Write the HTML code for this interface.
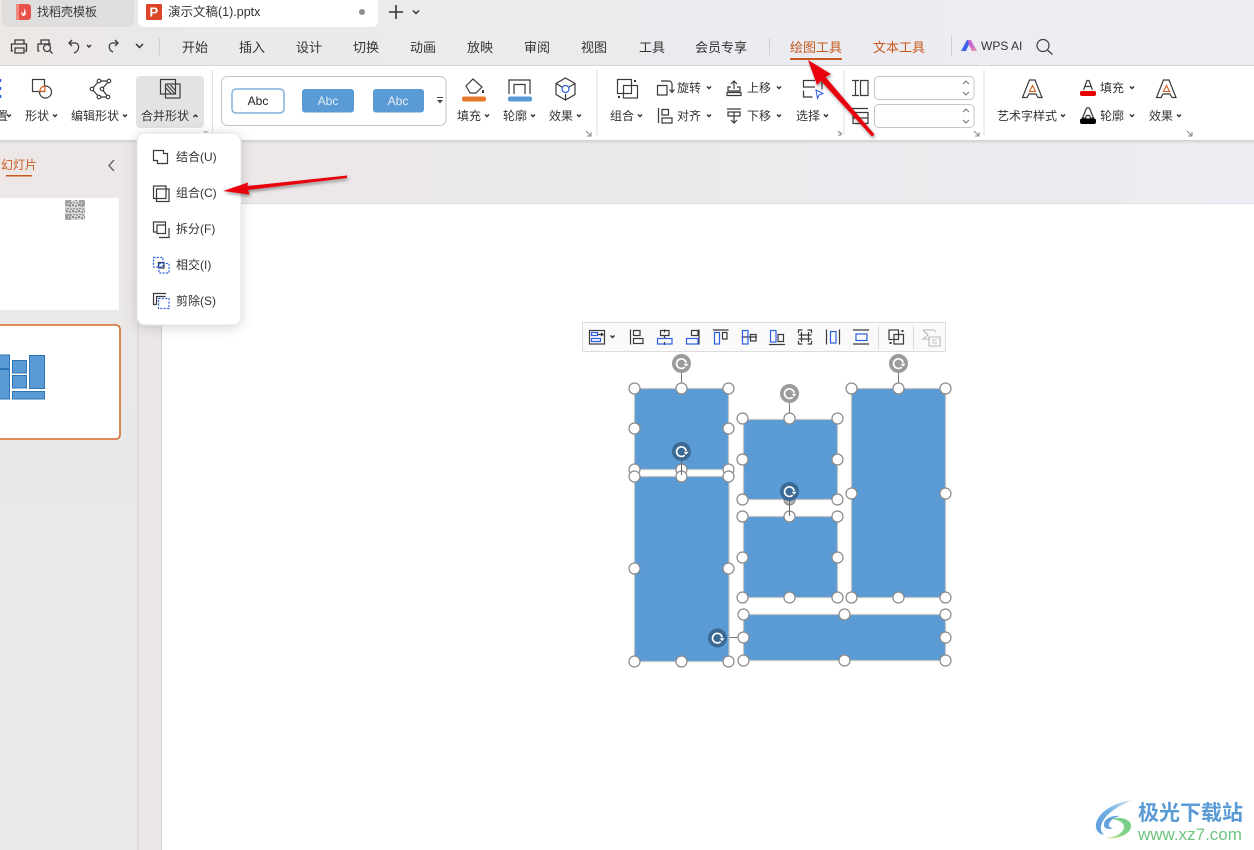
<!DOCTYPE html>
<html lang="zh-CN">
<head>
<meta charset="utf-8">
<title>WPS</title>
<style>
html,body{margin:0;padding:0;background:#fff;width:1254px;height:850px;overflow:hidden}
svg{display:block;position:absolute;left:0;top:0}
text{font-family:"Liberation Sans","Noto Sans CJK SC",sans-serif;fill:#333}
.t13{font-size:13px}
.t12{font-size:12px}
.i{fill:none;stroke:#3a3a3a;stroke-width:1.2}
.b{fill:none;stroke:#2b5fe0;stroke-width:1.2}
.c{fill:none;stroke:#333;stroke-width:1.5}
.h circle{fill:#fff;stroke:#8a8a8a;stroke-width:1.2}
.s{fill:#5b9bd5;stroke:#c4c4c4;stroke-width:1.2}
</style>
</head>
<body>
<svg width="1254" height="850" viewBox="0 0 1254 850" xmlns="http://www.w3.org/2000/svg">
<defs>
<linearGradient id="hd" x1="0" x2="1" y1="0" y2="0"><stop offset="0" stop-color="#ebe8e6"/><stop offset=".45" stop-color="#ebebee"/><stop offset="1" stop-color="#ecedf3"/></linearGradient>
<linearGradient id="bd" x1="0" x2="1" y1="0" y2="0"><stop offset="0" stop-color="#ede7e7"/><stop offset=".4" stop-color="#ebe8ea"/><stop offset="1" stop-color="#ecedf2"/></linearGradient>
<linearGradient id="pn" x1="0" x2="0" y1="0" y2="1"><stop offset="0" stop-color="#eee7e7"/><stop offset=".4" stop-color="#e9e8e9"/><stop offset="1" stop-color="#ebe9ea"/></linearGradient>
<linearGradient id="rs" x1="0" x2="0" y1="0" y2="1"><stop offset="0" stop-color="#cfcfcf"/><stop offset="1" stop-color="#cfcfcf" stop-opacity="0"/></linearGradient>
<linearGradient id="sb" x1="0" x2="1" y1="0" y2="1"><stop offset="0" stop-color="#5f9ede"/><stop offset="1" stop-color="#6aa9df"/></linearGradient>
<linearGradient id="sb2" x1="1" x2="0" y1="0" y2="1"><stop offset="0" stop-color="#d5e8f5"/><stop offset=".5" stop-color="#70aee3"/><stop offset="1" stop-color="#5d9bdc"/></linearGradient>
<linearGradient id="sg" x1="1" x2="0" y1="0" y2="1"><stop offset="0" stop-color="#6ccb88"/><stop offset=".6" stop-color="#88d488"/><stop offset="1" stop-color="#eee389"/></linearGradient>
<filter id="ms" x="-30%" y="-20%" width="160%" height="140%"><feDropShadow dx="0" dy="2" stdDeviation="6" flood-color="#000" flood-opacity=".16"/></filter>
<filter id="as" x="-20%" y="-20%" width="140%" height="140%"><feDropShadow dx="1" dy="2" stdDeviation="1.5" flood-color="#000" flood-opacity=".4"/></filter>
<pattern id="qr" width="6" height="6" patternUnits="userSpaceOnUse"><rect width="6" height="6" fill="#d8d8d8"/><rect width="2" height="2" fill="#8a8a8a"/><rect x="3" y="1" width="2" height="2" fill="#999"/><rect x="1" y="4" width="2" height="1" fill="#8a8a8a"/><rect x="4" y="4" width="2" height="2" fill="#aaa"/></pattern>
<g id="rg"><circle r="9.5" fill="#9b9b9b"/><path d="M4.6 -.6A4.8 4.8 0 1 0 3.2 3.6" fill="none" stroke="#fff" stroke-width="1.7"/><path d="M2.2 .2L7 .2L4.6 3.2Z" fill="#fff"/></g>
<g id="rd"><circle r="9.5" fill="#3a6a94"/><path d="M4.6 -.6A4.8 4.8 0 1 0 3.2 3.6" fill="none" stroke="#fff" stroke-width="1.7"/><path d="M2.2 .2L7 .2L4.6 3.2Z" fill="#fff"/></g>
</defs>

<!-- backgrounds -->
<rect width="1254" height="66" fill="url(#hd)"/>
<rect y="65" width="1254" height="1.2" fill="#d6d5d5"/>
<rect y="66" width="1254" height="74" fill="#fff"/>
<rect y="140" width="1254" height="64" fill="url(#bd)"/>
<rect y="144" width="138" height="706" fill="url(#pn)"/>
<rect x="138" y="144" width="24" height="706" fill="#ebe7e8"/>
<rect y="140" width="1254" height="4" fill="url(#rs)"/>
<rect x="137.500" y="144" width="1" height="706" fill="#cfcdce"/>
<rect x="161" y="203" width="1" height="647" fill="#d2d0d1"/>
<rect x="162" y="203" width="1092" height="647" fill="#fff"/>
<rect x="162" y="203" width="1092" height="1" fill="#dcdcde"/>

<!-- tabs -->
<rect x="2" y="-6" width="132" height="33" rx="6" fill="#e0dedc"/>
<rect x="138" y="-6" width="240" height="33" rx="6" fill="#fff"/>
<path d="M16 4h12a3 3 0 0 1 3 3v10a3 3 0 0 1-3 3H16z" fill="#e9524a"/><rect x="16" y="4" width="3" height="16" fill="#f08a80"/>
<path d="M24 8c1 3 0 4-1 6-1-1-1-2-1-3-1 1-1 4 1 5 3 0 4-4 1-8z" fill="#fff"/>
<rect x="146" y="4" width="16" height="16" rx="1.5" fill="#dd4527"/>
<text x="149.500" y="16.500" style="font-size:13px;font-weight:bold;fill:#fff">P</text>
<text x="37" y="16" class="t12" style="fill:#3a3a3a">找稻壳模板</text>
<text x="168" y="16" style="font-size:12.500px;fill:#333">演示文稿(1).pptx</text>
<circle cx="362" cy="12" r="3" fill="#8e8e8e"/>
<path d="M396 5v14M389 12h14" stroke="#333" stroke-width="1.6" fill="none"/>
<path d="M413 10.500l3 3 3-3" class="c"/>

<!-- quick access -->
<g class="i" style="stroke-width:1.3">
<path d="M15 44v-4h9v4M13 51h-1.500v-7h15v7H25M15 48h9v5h-9z"/>
<path d="M39.500 51h-1.500v-7h13M41 44v-4h8v4"/><circle cx="47" cy="48" r="3.500"/><path d="M49.500 50.500l3 3"/>
<path d="M72 40l-3 3 3 3M69 43h6c5 0 5 8-1 10"/>
<path d="M115 40l3 3-3 3M118 43h-5c-5 0-5 7 0 9"/>
</g>
<path d="M87 45l2 2 2-2M136 44l3.500 3.500 3.500-3.500" class="c"/>
<rect x="159" y="38" width="1" height="17" fill="#cfcfcf"/>

<!-- main tabs -->
<g class="t13">
<text x="182" y="52">开始</text><text x="239" y="52">插入</text><text x="296" y="52">设计</text><text x="353" y="52">切换</text><text x="410" y="52">动画</text><text x="467" y="52">放映</text><text x="524" y="52">审阅</text><text x="581" y="52">视图</text><text x="639" y="52">工具</text><text x="695" y="52">会员专享</text>
<text x="790" y="52" style="fill:#c8591e">绘图工具</text><text x="873" y="52" style="fill:#c8591e">文本工具</text>
</g>
<rect x="790" y="58" width="52" height="2" fill="#c8591e"/>
<rect x="769" y="38" width="1" height="17" fill="#cfcfcf"/>
<rect x="951" y="36" width="1" height="20" fill="#cfcfcf"/>
<path d="M961 51l6-11h4l-5 11z" fill="#3f63e8"/><path d="M968 40h3l3 6 3 5h-5l-3-6z" fill="#c968d0"/><path d="M971 46l2 5h4z" fill="#f08fa8"/>
<text x="981" y="50" style="font-size:12px;fill:#333">WPS AI</text>
<circle cx="1043" cy="45.500" r="6" class="i"/><path d="M1047.500 50l5 4.500" class="i"/>

<!-- ribbon separators -->
<g fill="#dedede"><rect x="212" y="70" width="1" height="65"/><rect x="596.500" y="70" width="1" height="65"/><rect x="843.500" y="70" width="1" height="65"/><rect x="983.500" y="70" width="1" height="65"/></g>

<!-- ribbon left -->
<path d="M.5 79v3M.5 87v3M.5 95v3" stroke="#2b5fe0" stroke-width="1.6"/>
<text x="-4" y="120" class="t12">置</text>
<path d="M7 114.500l2 2 2-2M53 114.500l2 2 2-2M123 114.500l2 2 2-2" class="c"/>
<circle cx="45.500" cy="92" r="6" fill="#fff" stroke="#3a3a3a" stroke-width="1.200"/>
<rect x="32.500" y="79.500" width="12" height="12" fill="#fff" stroke="#3a3a3a" stroke-width="1.200"/>
<path d="M39.700 91.300C40 88.500 42 86.300 44.800 86V91.300z" fill="#fff" stroke="#d2601f" stroke-width="1.200"/>
<text x="25" y="120" class="t12">形状</text>
<g class="i"><path d="M99 81h10l-7 8 6 8h-9l-7-8z"/></g>
<g fill="#fff" stroke="#3a3a3a" stroke-width="1.100"><circle cx="99" cy="81" r="1.800"/><circle cx="109" cy="81" r="1.800"/><circle cx="92" cy="89" r="1.800"/><circle cx="102" cy="89" r="1.800"/><circle cx="99" cy="97" r="1.800"/><circle cx="108" cy="97" r="1.800"/></g>
<text x="71" y="120" class="t12">编辑形状</text>
<rect x="136" y="76" width="68" height="52" rx="4" fill="#e3e3e3"/>
<g class="i"><rect x="160.500" y="79.500" width="15" height="14.500"/><rect x="165.500" y="84" width="14.500" height="14"/><path d="M167 85l8 9M170.500 85l4.500 5M166 88l5.500 6"/></g>
<text x="141" y="120" class="t12">合并形状</text>
<path d="M193.500 117l2-2 2 2" class="c"/>
<path d="M204 131l3 3M207 131v3h-3" stroke="#888" fill="none"/>

<!-- style gallery -->
<rect x="221.500" y="76.500" width="224.500" height="49" rx="6" fill="#fff" stroke="#c4c4c4"/>
<rect x="232" y="89" width="52" height="24" rx="4" fill="#fff" stroke="#82b1db" stroke-width="1.500"/>
<rect x="302" y="89" width="52" height="23.500" rx="3" fill="#5b9bd5"/>
<rect x="373" y="89" width="51" height="23.500" rx="3" fill="#5b9bd5"/>
<text x="258" y="105" text-anchor="middle" style="font-size:12px;fill:#222">Abc</text>
<text x="328" y="105" text-anchor="middle" style="font-size:12px;fill:#e4eef8">Abc</text>
<text x="398" y="105" text-anchor="middle" style="font-size:12px;fill:#e4eef8">Abc</text>
<path d="M437 97.500h6" stroke="#444"/><path d="M437 100l3 3.500 3-3.500z" fill="#444"/>

<!-- fill/outline/effect -->
<path d="M466 86l7-7 9 8-6 6h-6z" fill="#fff" stroke="#3a3a3a" stroke-width="1.200"/><path d="M483 90v3" stroke="#3a3a3a" stroke-width="2"/>
<rect x="462" y="96.500" width="24" height="5" rx="2" fill="#e8772e"/>
<path d="M509 94V80h21v14M514 94V84.500h11V94" class="i"/>
<rect x="508" y="96.500" width="24" height="5" rx="2" fill="#5b9bd5"/>
<path d="M565.500 78l9.500 5.500v11L565.500 100l-9.500-5.500v-11z" class="i"/>
<path d="M556 83.500l6 3.500M575 83.500l-6 3.500M565.500 94v6" class="i"/>
<circle cx="565.500" cy="89" r="3.500" fill="none" stroke="#2b5fe0" stroke-width="1.200"/>
<text x="457" y="120" class="t12">填充</text><text x="503" y="120" class="t12">轮廓</text><text x="549" y="120" class="t12">效果</text>
<path d="M485 114.500l2 2 2-2M531 114.500l2 2 2-2M577 114.500l2 2 2-2" class="c"/>
<path d="M586 131l5 5M591 132v4h-4" stroke="#888" fill="none"/>

<!-- arrange -->
<g class="i"><rect x="617.500" y="79.500" width="14" height="14"/><rect x="623.500" y="85.500" width="14" height="12.500"/></g>
<rect x="634" y="80" width="2" height="2" fill="#333"/><rect x="618" y="96" width="2" height="2" fill="#333"/>
<text x="610" y="120" class="t12">组合</text>
<path d="M638 114.500l2 2 2-2" class="c"/>
<path d="M657.500 85.500h9.500v9.500h-9.500zM661 81h8a3 3 0 0 1 3 3v8" class="i"/><path d="M669.500 89.500l2.500 2.800 2.500-2.800" class="i"/>
<text x="677" y="92" class="t12">旋转</text><path d="M707 86.500l2 2 2-2" class="c"/>
<path d="M658.500 108v15M662 109.500h6.500v5.500h-6.500zM662 118h10v5h-10z" class="i"/>
<text x="677" y="120" class="t12">对齐</text><path d="M707 114.500l2 2 2-2" class="c"/>
<path d="M731 84l3-3 3 3M734 81v8M731 87h-3v4h12v-4h-3M727 92.500h14v3h-14z" class="i"/>
<text x="747" y="92" class="t12">上移</text><path d="M777 86.500l2 2 2-2" class="c"/>
<path d="M727 109h14M728 112h12v4h-12zM734 112v11M731 120l3 3 3-3" class="i"/>
<text x="747" y="120" class="t12">下移</text><path d="M777 114.500l2 2 2-2" class="c"/>
<path d="M815 80.500h-11.500v6.500h11.500M803.500 90.500v6.500h9M822 80.500v9" class="i"/>
<path d="M816 90l7 3.500-4 1.500-1.500 3.500z" fill="#fff" stroke="#2b5fe0"/>
<text x="796" y="120" class="t12">选择</text><path d="M824 114.500l2 2 2-2" class="c"/>
<path d="M838 131l3 3M841 132v3h-3" stroke="#888" fill="none"/>

<!-- size -->
<path d="M852 80.500h7M852 95.500h7M855.500 80.500v15M860.500 80.500h7.500v15h-7.500z" class="i"/>
<path d="M852 108.500h16M853 112.500h15v11h-15zM853 118h15" class="i"/>
<rect x="874.500" y="76.500" width="99.500" height="23" rx="4" fill="#fff" stroke="#c6c6c6"/>
<rect x="874.500" y="104.500" width="99.500" height="23" rx="4" fill="#fff" stroke="#c6c6c6"/>
<path d="M963 84l3-3 3 3M963 92l3 3 3-3M963 112l3-3 3 3M963 120l3 3 3-3" fill="none" stroke="#777"/>
<path d="M974 131l5 5M979 132v4h-4" stroke="#888" fill="none"/>

<!-- art text -->
<path d="M1022.500 97.500l7-17.500h5.500l7 17.500h-4l-2-3.500h-7l-2 3.500z" class="i"/><path d="M1029.500 91.500l3-6 3 6z" fill="none" stroke="#d2601f" stroke-width="1.100"/>
<text x="997" y="120" class="t12">艺术字样式</text><path d="M1061 114.500l2 2 2-2" class="c"/>
<path d="M1083.500 90l3.500-9.500h2l3.500 9.500M1085 86.500h6" class="i"/><rect x="1080" y="91" width="16" height="5" rx="2" fill="#e60000"/>
<text x="1100" y="92" class="t12">填充</text><path d="M1130 86.500l2 2 2-2" class="c"/>
<path d="M1082.500 118l4-10h3l4 10h-3l-1-2.500h-3l-1 2.500z" class="i"/><rect x="1080" y="118.500" width="16" height="5.500" rx="2" fill="#000"/>
<text x="1100" y="120" class="t12">轮廓</text><path d="M1130 114.500l2 2 2-2" class="c"/>
<path d="M1156.500 97.500l7-17.500h5.500l7 17.500h-4l-2-3.500h-7l-2 3.500z" class="i"/><path d="M1163.500 91.500l3-6 3 6z" fill="none" stroke="#d2601f" stroke-width="1.100"/>
<text x="1149" y="120" class="t12">效果</text><path d="M1177 114.500l2 2 2-2" class="c"/>
<path d="M1187 131l5 5M1192 132v4h-4" stroke="#888" fill="none"/>

<!-- side panel -->
<text x="1" y="169" class="t12" style="fill:#c8591e">幻灯片</text>
<rect x="6" y="175" width="26" height="1.500" fill="#c8591e"/>
<path d="M114 160l-5 5.500 5 5.500" fill="none" stroke="#555" stroke-width="1.300"/>
<rect x="-5" y="198" width="124" height="112" rx="2" fill="#fff"/>
<rect x="65" y="200" width="20" height="20" fill="url(#qr)"/>
<g fill="none" stroke="#999" stroke-width="1.500"><rect x="66" y="201" width="4" height="4"/><rect x="80" y="201" width="4" height="4"/><rect x="66" y="215" width="4" height="4"/></g>
<rect x="-5" y="325" width="125" height="114" rx="4" fill="#fff" stroke="#d56a2c" stroke-width="1.600"/>
<g fill="#5b9bd5" stroke="#2e75b6" stroke-width="1"><rect x="-5" y="355" width="14.500" height="44"/><path d="M-5 369h14.500" fill="none" stroke-width="2"/><rect x="12.500" y="360.500" width="14" height="12.500"/><rect x="12.500" y="375.500" width="14" height="12.500"/><rect x="29.500" y="355.500" width="15" height="33"/><rect x="12.500" y="391.500" width="32" height="7.500"/></g>

<!-- dropdown menu -->
<rect x="137" y="133" width="104" height="192" rx="8" fill="#fff" stroke="#e5e5e5" filter="url(#ms)"/>
<g class="i">
<path d="M153.500 150.500h10v3h4v10h-10v-3h-4z"/>
<rect x="153.500" y="186" width="12.500" height="12.500"/><rect x="156.500" y="189" width="12.500" height="12.500"/>
<path d="M165.500 225v-3h-12v10h3"/><rect x="157" y="225" width="8.500" height="8.500"/><path d="M169 228v9.500h-10"/>
<rect x="158.500" y="262.500" width="5.500" height="5.500"/>
<path d="M166 293.500h-12.500v11h3M156.500 304.500v-8h9"/>
</g>
<g class="b" stroke-dasharray="2 1.400"><rect x="153.500" y="257.500" width="9.500" height="9.500"/><rect x="159" y="263.500" width="10" height="9.500"/><rect x="158.500" y="298.500" width="10.500" height="10"/></g>
<g class="t12" style="fill:#333"><text x="176" y="161">结合(U)</text><text x="176" y="197">组合(C)</text><text x="176" y="233">拆分(F)</text><text x="176" y="269">相交(I)</text><text x="176" y="305">剪除(S)</text></g>

<!-- floating toolbar -->
<rect x="582.500" y="322.500" width="363" height="29" fill="#fafafa" stroke="#dcdcdc"/>
<rect x="589.500" y="330.500" width="15" height="13.500" class="i"/>
<path d="M591.500 332.500h6v3h-6zM591.500 338.500h9v3h-9z" class="b" stroke-width="1"/>
<path d="M598 334.500h5M601 333l2 1.500-2 1.500" class="i" stroke-width="1"/>
<path d="M610.500 335.500l2 2 2-2" class="c"/>
<!-- align left -->
<path d="M630.500 329.500v15M633.500 330.500h6.500v5h-6.500zM633.500 338.500h9.500v5h-9.500z" class="i"/>
<!-- align center -->
<path d="M664.500 329.500v3M664.500 335.500v3M664.500 342v3M660.500 330.500h8.500v5h-8.500z" class="i"/>
<rect x="657.500" y="338.500" width="14.500" height="5.500" class="b"/>
<!-- align right -->
<path d="M699 329.500v15M691.500 330.500h6.500v5h-6.500z" class="i"/>
<rect x="686.500" y="338.500" width="11.500" height="5.500" class="b"/>
<!-- align top -->
<path d="M713 330h15.500M722.500 332.500h4.500v6.500h-4.500z" class="i"/>
<rect x="714.500" y="332.500" width="5" height="11.500" class="b"/>
<!-- align middle -->
<path d="M741.500 337h15.500M750.500 334.500h5.500v6.500h-5.500z" class="i" />
<rect x="742.500" y="330.500" width="5.500" height="13.500" class="b" fill="none"/>
<!-- align bottom -->
<path d="M769 344.500h16M778 334.500h5.500v7h-5.500z" class="i"/>
<rect x="770.500" y="330.500" width="5.500" height="11.500" class="b"/>
<!-- grid -->
<path d="M798.500 333v-3h4M807.500 330h4v3M811.500 341v3h-4M802.500 344h-4v-3M801.500 332v10M808.500 332v10M798.500 335h13M798.500 339h13" class="i"/>
<!-- distribute -->
<path d="M826.500 329.500v15M839.500 329.500v15M853 330h16M853 344h16" class="i"/>
<rect x="830.500" y="331.500" width="5.500" height="11.500" class="b"/>
<rect x="856" y="334" width="11" height="6.500" class="b"/>
<rect x="878" y="325" width="1" height="24" fill="#d8d8d8"/>
<g class="i"><rect x="889" y="330" width="9.500" height="9.500"/><rect x="894" y="334.500" width="9.500" height="9.500"/></g>
<rect x="901.500" y="330" width="2" height="2" fill="#333"/><rect x="889.500" y="342" width="2" height="2" fill="#333"/>
<rect x="913" y="325" width="1" height="24" fill="#d8d8d8"/>
<path d="M923 330h11l2 2M923 330l5 5-5 4h7M929 337h11v9h-11zM932 340h5M932 343h5" fill="none" stroke="#b8b8b8" stroke-width="1.100"/>

<!-- shapes -->
<path d="M681.500 354v35M789.500 403v16M898.500 354v35M718 637.500h25" stroke="#777" fill="none"/>
<rect class="s" x="634.500" y="388.500" width="94" height="81"/>
<rect class="s" x="634.500" y="476.500" width="94.500" height="185"/>
<rect class="s" x="743.500" y="419.500" width="94" height="80"/>
<rect class="s" x="743.500" y="516.500" width="94" height="81"/>
<rect class="s" x="851.500" y="388.500" width="94" height="209"/>
<rect class="s" x="743.500" y="614.500" width="202" height="46"/>

<g class="h">
<circle cx="634.500" cy="388.500" r="5.500"/><circle cx="681.500" cy="388.500" r="5.500"/><circle cx="728.500" cy="388.500" r="5.500"/>
<circle cx="634.500" cy="428.500" r="5.500"/><circle cx="728.500" cy="428.500" r="5.500"/>
<circle cx="634.500" cy="469.500" r="5.500"/><circle cx="681.500" cy="469.500" r="5.500"/><circle cx="728.500" cy="469.500" r="5.500"/>
<circle cx="634.500" cy="476.500" r="5.500"/><circle cx="681.500" cy="476.500" r="5.500"/><circle cx="728.500" cy="476.500" r="5.500"/>
<circle cx="634.500" cy="568.500" r="5.500"/><circle cx="728.500" cy="568.500" r="5.500"/>
<circle cx="634.500" cy="661.500" r="5.500"/><circle cx="681.500" cy="661.500" r="5.500"/><circle cx="728.500" cy="661.500" r="5.500"/>
<circle cx="742.500" cy="418.500" r="5.500"/><circle cx="789.500" cy="418.500" r="5.500"/><circle cx="837.500" cy="418.500" r="5.500"/>
<circle cx="742.500" cy="459.500" r="5.500"/><circle cx="837.500" cy="459.500" r="5.500"/>
<circle cx="742.500" cy="499.500" r="5.500"/><circle cx="789.500" cy="499.500" r="5.500" style="fill:#b5b5b5"/><circle cx="837.500" cy="499.500" r="5.500"/>
<circle cx="742.500" cy="516.500" r="5.500"/><circle cx="789.500" cy="516.500" r="5.500"/><circle cx="837.500" cy="516.500" r="5.500"/>
<circle cx="742.500" cy="557.500" r="5.500"/><circle cx="837.500" cy="557.500" r="5.500"/>
<circle cx="742.500" cy="597.500" r="5.500"/><circle cx="789.500" cy="597.500" r="5.500"/><circle cx="837.500" cy="597.500" r="5.500"/>
<circle cx="851.500" cy="388.500" r="5.500"/><circle cx="898.500" cy="388.500" r="5.500"/><circle cx="945.500" cy="388.500" r="5.500"/>
<circle cx="851.500" cy="493.500" r="5.500"/><circle cx="945.500" cy="493.500" r="5.500"/>
<circle cx="851.500" cy="597.500" r="5.500"/><circle cx="898.500" cy="597.500" r="5.500"/><circle cx="945.500" cy="597.500" r="5.500"/>
<circle cx="743.500" cy="614.500" r="5.500"/><circle cx="844.500" cy="614.500" r="5.500"/><circle cx="945.500" cy="614.500" r="5.500"/>
<circle cx="743.500" cy="637.500" r="5.500"/><circle cx="945.500" cy="637.500" r="5.500"/>
<circle cx="743.500" cy="660.500" r="5.500"/><circle cx="844.500" cy="660.500" r="5.500"/><circle cx="945.500" cy="660.500" r="5.500"/>
</g>
<path d="M681.500 460v15M789.500 500v16" stroke="#666" fill="none"/>
<use href="#rg" x="681.500" y="363.500"/><use href="#rg" x="789.500" y="393.500"/><use href="#rg" x="898.500" y="363.500"/>
<use href="#rd" x="681.500" y="451.500"/><use href="#rd" x="789.500" y="491.500"/><use href="#rd" x="717.500" y="638"/>

<!-- red arrows -->
<path d="M223 191L248 182.500L247.500 186L347 175.500L347 178L248 190L249.500 194.500z" fill="#e8000b" filter="url(#as)"/>
<path d="M808 60L831 74L825.500 77L874.500 134.500L872 136.500L821 81L817 85z" fill="#e8000b" filter="url(#as)"/>

<!-- watermark -->
<path d="M1133 800C1115 802 1098 812 1096 824C1095 830 1099 834 1104 835C1100 831 1100 826 1103 821C1108 812 1120 805 1133 800z" fill="url(#sb2)"/>
<path d="M1120 816C1110 815 1103 820 1104 826C1105 829 1110 830 1113 828C1109 828 1108 825 1110 822C1112 819 1116 817 1120 816z" fill="url(#sb)"/>
<path d="M1112 819C1122 816 1132 820 1131 827C1130 834 1118 840 1104 838C1114 838 1124 833 1124 827C1124 822 1118 820 1112 819z" fill="url(#sg)"/>
<text x="1138" y="820" style="font-size:21px;font-weight:bold;fill:#5b9bd5">极光下载站</text>
<text x="1138" y="840" style="font-size:17px;fill:#6cc47e">www.xz7.com</text>
</svg>
</body>
</html>
